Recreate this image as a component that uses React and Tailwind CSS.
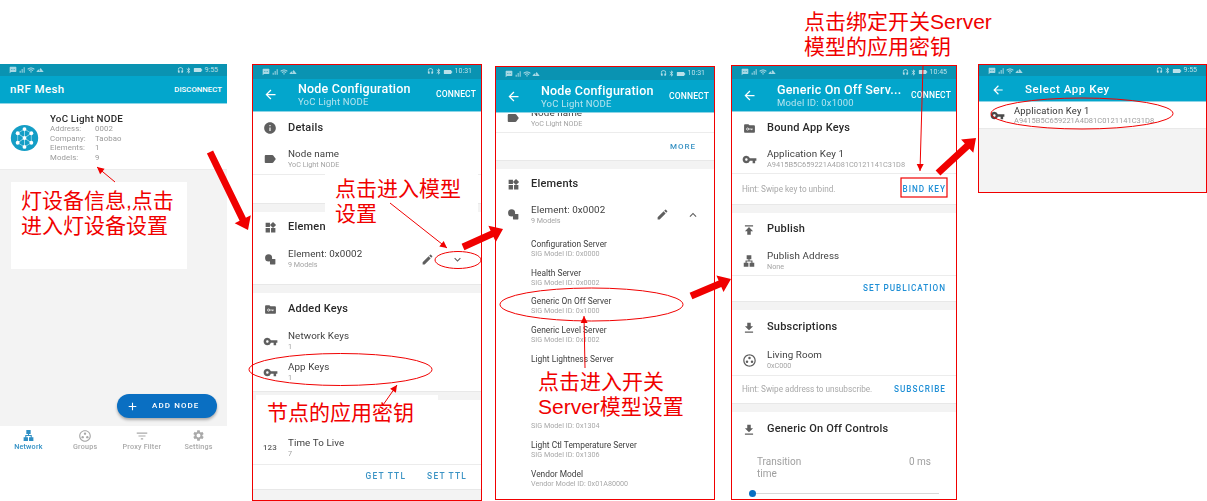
import React from 'react';
import {
  MdInfo, MdLabel, MdWidgets, MdVpnKey, MdArrowBack, MdEdit, MdExpandMore, MdExpandLess,
  MdPublish, MdGetApp, MdOutlineGroupWork, MdFilterList, MdSettings, MdLan, MdAdd,
  MdSignalCellularAlt, MdWifi, MdHeadset, MdBluetooth, MdBatteryFull, MdTextsms, MdLandscape,
} from 'react-icons/md';

const ROBOTO = 'font-[Roboto,"Liberation_Sans",sans-serif]';

function StatusBar({ time, cls }) {
  return (
    <div className={`flex items-center justify-between shrink-0 bg-[#0a93b2] text-[#cfeaf1] pl-[9px] pr-[9px] ${cls}`}>
      <div className="flex items-center gap-[1px] opacity-80">
        <MdTextsms size={8} />
        <MdSignalCellularAlt size={8} />
        <MdWifi size={8} />
        <MdLandscape size={8} />
      </div>
      <div className="flex items-center gap-[1px] opacity-90">
        <MdHeadset size={7} />
        <MdBluetooth size={7} />
        <MdBatteryFull size={10} className="rotate-90" />
        <span className="text-[7px] leading-none ml-[1px]">{time}</span>
      </div>
    </div>
  );
}

function AppBar({ title, sub, action = 'CONNECT' }) {
  return (
    <div className="relative z-10 flex items-center h-[33px] shrink-0 bg-[#03a6cc] border-b border-[#8ed5e6] text-white pl-[10px] pr-[5px]">
      <MdArrowBack size={15} className="shrink-0" />
      <div className="ml-[20px] flex-1 min-w-0">
        <div className="text-[12.5px] leading-[15px] font-medium tracking-[0.2px] whitespace-nowrap">{title}</div>
        <div className="text-[9.5px] leading-[12px] text-[#b6e4ef] tracking-[0.2px] whitespace-nowrap">{sub}</div>
      </div>
      <div className="text-[8.5px] font-medium tracking-[0.15px] shrink-0">{action}</div>
    </div>
  );
}

function Phone({ cls, children }) {
  return (
    <div className={`absolute border-[1.5px] border-[#f00000] overflow-hidden bg-white ${cls}`}>
      <div className={`flex flex-col h-full blur-[0.35px] ${ROBOTO}`}>{children}</div>
    </div>
  );
}

const Band = ({ cls = 'h-[9px]' }) => <div className={`${cls} bg-[#f3f3f3] border-t border-[#e8e8e8] shrink-0`} />;

function Header({ icon, title, cls = 'h-[32px]' }) {
  return (
    <div className={`flex items-center pl-2 shrink-0 ${cls}`}>
      <div className="w-[18px] mr-[9px] flex justify-center text-[#5f5f5f]">{icon}</div>
      <div className="text-[11px] font-medium tracking-[0.2px] text-[#2a2a2a] whitespace-nowrap">{title}</div>
    </div>
  );
}

function Row({ icon, title, sub, right, cls = 'h-[31px]', subCls = 'text-[7.2px]' }) {
  return (
    <div className={`flex items-center pl-2 shrink-0 ${cls}`}>
      <div className="w-[18px] mr-[9px] flex justify-center text-[#5f5f5f]">{icon}</div>
      <div className="flex-1 min-w-0">
        <div className="text-[9.8px] leading-[12px] text-[#404040] whitespace-nowrap tracking-[0.1px]">{title}</div>
        <div className={`${subCls} leading-[10px] text-[#a4a4a4] whitespace-nowrap`}>{sub}</div>
      </div>
      {right}
    </div>
  );
}

function Action({ hint, label, cls = 'h-[29px]' }) {
  return (
    <div className={`flex items-center justify-between pl-[10px] pr-[10px] border-t border-[#ececec] shrink-0 ${cls}`}>
      <span className="text-[8.2px] text-[#a8a8a8] whitespace-nowrap">{hint}</span>
      <span className="text-[8.2px] font-medium tracking-[1px] text-[#1f8fd6] whitespace-nowrap">{label}</span>
    </div>
  );
}

function FolderKey() {
  return (
    <svg width="13" height="13" viewBox="0 0 24 24">
      <path fill="#5f5f5f" d="M10 4H4c-1.1 0-2 .9-2 2v12c0 1.1.9 2 2 2h16c1.1 0 2-.9 2-2V8c0-1.1-.9-2-2-2h-8z" />
      <circle cx="8.5" cy="13" r="2" fill="none" stroke="#fff" strokeWidth="1.4" />
      <path stroke="#fff" strokeWidth="1.4" d="M10.5 13H18M16 13v2" />
    </svg>
  );
}

function Shapes() {
  return (
    <svg width="13" height="13" viewBox="0 0 24 24" fill="#5f5f5f">
      <circle cx="8.5" cy="9" r="6.5" />
      <rect x="11" y="11" width="10" height="10" rx="1" />
    </svg>
  );
}

function Logo() {
  const nodes = [[20, 6], [30, 12], [30, 26], [20, 32], [10, 26], [10, 12], [20, 19]];
  return (
    <svg width="31" height="26" viewBox="0 0 40 38">
      <ellipse cx="20" cy="19" rx="20" ry="19" fill="#149ec6" />
      {nodes.slice(0, 6).map(([x, y], i) => (
        <g key={i}>
          <line x1="20" y1="19" x2={x} y2={y} stroke="#d7f0f7" strokeWidth="1" />
          <line x1={x} y1={y} x2={nodes[(i + 1) % 6][0]} y2={nodes[(i + 1) % 6][1]} stroke="#d7f0f7" strokeWidth="0.8" />
        </g>
      ))}
      {nodes.map(([x, y], i) => <circle key={i} cx={x} cy={y} r="2.8" fill="#fff" />)}
    </svg>
  );
}

function NavItem({ icon, label, active }) {
  return (
    <div className={`flex flex-col items-center w-[57px] ${active ? 'text-[#2f8fc4]' : 'text-[#a9a9a9]'}`}>
      <div className="h-[13px] flex items-center">{icon}</div>
      <div className="text-[7.2px] leading-[9px] font-medium tracking-[0.2px] whitespace-nowrap">{label}</div>
    </div>
  );
}

function PhoneList() {
  const rows = [['Address:', '0002'], ['Company:', 'Taobao'], ['Elements:', '1'], ['Models:', '9']];
  return (
    <div className={`absolute left-0 top-[64px] w-[227px] h-[396px] flex flex-col blur-[0.35px] ${ROBOTO}`}>
      <StatusBar time="9:55" cls="h-[12px]" />
      <div className="flex items-center justify-between h-[28px] shrink-0 bg-[#03a6cc] border-b border-[#8ed5e6] text-white pl-[10px] pr-[5px]">
        <span className="text-[11.5px] font-medium tracking-[0.4px]">nRF Mesh</span>
        <span className="text-[7.8px] font-medium">DISCONNECT</span>
      </div>
      <div className="flex h-[66px] shrink-0 bg-white border-b border-[#ececec] pl-[9px] pt-[9px]">
        <div className="pt-[12px] w-[41px] shrink-0"><Logo /></div>
        <div>
          <div className="text-[9.8px] leading-[11px] font-medium text-[#2a2a2a] tracking-[0.2px]">YoC Light NODE</div>
          {rows.map(([a, b]) => (
            <div key={a} className="flex text-[7.8px] leading-[9.5px] text-[#9a9a9a] tracking-[0.1px]">
              <span className="w-[45px]">{a}</span><span>{b}</span>
            </div>
          ))}
        </div>
      </div>
      <div className="relative flex-none h-[256px] bg-[#f3f3f3]">
        <div className="absolute right-[10px] bottom-[8px] w-[100px] h-[24px] rounded-full bg-[#0a6fc2] shadow-[0_2px_3px_rgba(0,0,0,0.3)] flex items-center text-white pl-[9px]">
          <MdAdd size={13} />
          <span className="ml-[13px] text-[8px] font-medium tracking-[1.1px] whitespace-nowrap">ADD NODE</span>
        </div>
      </div>
      <div className="flex pt-[3px] bg-white flex-1">
        <NavItem active label="Network" icon={<MdLan size={13} />} />
        <NavItem label="Groups" icon={<MdOutlineGroupWork size={14} />} />
        <NavItem label="Proxy Filter" icon={<MdFilterList size={14} />} />
        <NavItem label="Settings" icon={<MdSettings size={13} />} />
      </div>
    </div>
  );
}

function PhoneNode() {
  return (
    <Phone cls="left-[252px] top-[64px] w-[230px] h-[437px]">
      <StatusBar time="10:31" cls="h-[13.5px]" />
      <AppBar title="Node Configuration" sub="YoC Light NODE" />
      <Header icon={<MdInfo size={14} />} title="Details" cls="h-[33px]" />
      <Row icon={<MdLabel size={14} />} title="Node name" sub="YoC Light NODE" cls="h-[29px]" />
      <Action cls="h-[29px]" hint="" label="" />
      <Band />
      <Header icon={<MdWidgets size={13} />} title="Elements" />
      <Row icon={<Shapes />} title="Element: 0x0002" sub="9 Models"
        cls="h-[31px]"
        right={<div className="flex items-center text-[#5f5f5f] mr-[17px]"><MdEdit size={13} /><MdExpandMore size={13} className="ml-[17px]" /></div>} />
      <div className="h-[9px] shrink-0" />
      <Band />
      <Header icon={<FolderKey />} title="Added Keys" cls="h-[33px]" />
      <Row icon={<MdVpnKey size={15} />} title="Network Keys" sub="1" />
      <Row icon={<MdVpnKey size={15} />} title="App Keys" sub="1" />
      <div className="h-[3px] shrink-0" />
      <Band />
      <div className="h-[33px] shrink-0" />
      <Row icon={<span className="text-[8px] font-medium tracking-[0.2px]">123</span>} title="Time To Live" sub="7" />
      <div className="flex items-center justify-end gap-[21px] pr-[14px] h-[25px] border-t border-[#ececec] shrink-0 text-[8.4px] font-medium tracking-[1.2px] text-[#3a93c4]">
        <span>GET TTL</span><span>SET TTL</span>
      </div>
      <Band cls="flex-1" />
    </Phone>
  );
}

const MODELS = [
  ['Configuration Server', 'SIG Model ID: 0x0000'],
  ['Health Server', 'SIG Model ID: 0x0002'],
  ['Generic On Off Server', 'SIG Model ID: 0x1000'],
  ['Generic Level Server', 'SIG Model ID: 0x1002'],
  ['Light Lightness Server', ''],
  ['', ''],
  ['', 'SIG Model ID: 0x1304'],
  ['Light Ctl Temperature Server', 'SIG Model ID: 0x1306'],
  ['Vendor Model', 'Vendor Model ID: 0x01A80000'],
];

function PhoneElements() {
  return (
    <Phone cls="left-[495px] top-[66px] w-[220px] h-[434px]">
      <StatusBar time="10:31" cls="h-[13px]" />
      <AppBar title="Node Configuration" sub="YoC Light NODE" />
      <div className="-mt-[10px] flex flex-col">
        <Row icon={<MdLabel size={14} />} title="Node name" sub="YoC Light NODE" cls="h-[29px]" />
        <div className="flex items-center justify-end pr-[18px] h-[28px] border-t border-[#ececec] text-[8px] font-medium tracking-[1px] text-[#3a93c4]">MORE</div>
        <Band />
        <Header icon={<MdWidgets size={13} />} title="Elements" cls="h-[31px]" />
        <Row icon={<Shapes />} title="Element: 0x0002" sub="9 Models" cls="h-[29px]"
          right={<div className="flex items-center text-[#5f5f5f] mr-[14px]"><MdEdit size={13} /><MdExpandLess size={14} className="ml-[17px]" /></div>} />
        <div className="flex flex-col pt-[10px]">
          {MODELS.map(([t, s], i) => (
            <div key={i} className="h-[28.7px] pl-[35px] shrink-0">
              <div className="h-[10px] text-[8.4px] leading-[10px] text-[#404040] whitespace-nowrap">{t}</div>
              <div className="h-[10px] text-[7.2px] leading-[10px] text-[#a8a8a8] whitespace-nowrap">{s}</div>
            </div>
          ))}
        </div>
      </div>
    </Phone>
  );
}

function PhoneModel() {
  return (
    <Phone cls="left-[731px] top-[64.5px] w-[226px] h-[435px]">
      <StatusBar time="10:45" cls="h-[13.5px]" />
      <AppBar title="Generic On Off Serv..." sub="Model ID: 0x1000" />
      <Header icon={<FolderKey />} title="Bound App Keys" cls="h-[33px]" />
      <Row icon={<MdVpnKey size={15} />} title="Application Key 1" sub="A9415B5C659221A4D81C0121141C31D8" cls="h-[28px]" subCls="text-[7.4px]" />
      <Action hint="Hint: Swipe key to unbind." label="BIND KEY" cls="h-[31px]" />
      <Band />
      <Header icon={<MdPublish size={14} />} title="Publish" cls="h-[33px]" />
      <Row icon={<MdLan size={14} />} title="Publish Address" sub="None" cls="h-[29px]" />
      <Action hint="" label="SET PUBLICATION" cls="h-[26px]" />
      <Band />
      <Header icon={<MdGetApp size={14} />} title="Subscriptions" cls="h-[35px]" />
      <Row icon={<MdOutlineGroupWork size={15} />} title="Living Room" sub="0xC000" cls="h-[30px]" />
      <Action hint="Hint: Swipe address to unsubscribe." label="SUBSCRIBE" cls="h-[28px]" />
      <Band />
      <Header icon={<MdGetApp size={14} />} title="Generic On Off Controls" cls="h-[35px]" />
      <div className="flex justify-between pl-[25px] pr-[25px] pt-[9px] text-[10px] leading-[12px] text-[#a0a0a0]">
        <span className="w-[60px]">Transition time</span><span>0 ms</span>
      </div>
      <div className="relative h-[7px] mt-[10px] mx-[17px] flex items-center">
        <div className="w-[7px] h-[7px] rounded-full bg-[#0a6fc2] shrink-0" />
        <div className="flex-1 h-[1px] bg-[#d8d8d8]" />
      </div>
    </Phone>
  );
}

function PhoneSelect() {
  return (
    <Phone cls="left-[978px] top-[64px] w-[229px] h-[129px]">
      <StatusBar time="9:55" cls="h-[11px]" />
      <div className="flex items-center h-[26px] shrink-0 bg-[#03a6cc] border-b border-[#8ed5e6] text-white pl-[12px] pt-[2px]">
        <MdArrowBack size={14} />
        <span className="ml-[20px] text-[11.5px] font-medium tracking-[0.55px]">Select App Key</span>
      </div>
      <div className="flex items-center h-[27px] shrink-0 pl-[11px] border-b border-[#e9e9e9]">
        <div className="w-[14px] mr-[10px] text-[#4a4a4a]"><MdVpnKey size={15} /></div>
        <div>
          <div className="text-[9.4px] leading-[10px] text-[#333] whitespace-nowrap tracking-[0.2px]">Application Key 1</div>
          <div className="text-[7.5px] leading-[9px] text-[#a0a0a0] whitespace-nowrap">A9415B5C659221A4D81C0121141C31D8</div>
        </div>
      </div>
      <div className="flex-1 bg-[#f3f3f3]" />
    </Phone>
  );
}

function bigArrow(x1, y1, x2, y2, w = 7, hw = 9, hl = 12) {
  const d = Math.hypot(x2 - x1, y2 - y1);
  const ux = (x2 - x1) / d, uy = (y2 - y1) / d, nx = -uy, ny = ux;
  const bx = x2 - ux * hl, by = y2 - uy * hl;
  const p = (x, y) => `${x.toFixed(1)},${y.toFixed(1)}`;
  return [
    p(x1 + nx * w / 2, y1 + ny * w / 2), p(bx + nx * w / 2, by + ny * w / 2), p(bx + nx * hw, by + ny * hw),
    p(x2, y2),
    p(bx - nx * hw, by - ny * hw), p(bx - nx * w / 2, by - ny * w / 2), p(x1 - nx * w / 2, y1 - ny * w / 2),
  ].join(' ');
}

function Overlay() {
  const big = [[210, 152, 248, 230], [463, 247, 503, 229], [691, 296, 731, 279], [938, 173, 976, 138]];
  const thin = [[115, 182, 97, 167], [390, 203, 447, 248], [383, 405, 397, 385], [585, 368, 584, 316], [923, 66, 920, 171]];
  return (
    <svg className="absolute inset-0 z-30 pointer-events-none" width="1207" height="501" viewBox="0 0 1207 501">
      {big.map((a, i) => <polygon key={i} points={bigArrow(...a)} fill="#f00000" />)}
      {thin.map((a, i) => (
        <g key={i}>
          <line x1={a[0]} y1={a[1]} x2={a[2]} y2={a[3]} stroke="#f00000" strokeWidth="1" />
          <polygon points={bigArrow(a[0], a[1], a[2], a[3], 0, 3.5, 7)} fill="#f00000" />
        </g>
      ))}
      <g fill="none" stroke="#f00000" strokeWidth="1">
        <ellipse cx="458" cy="260" rx="23" ry="8.5" />
        <ellipse cx="340.5" cy="369.5" rx="91.5" ry="16" />
        <ellipse cx="591.5" cy="304.5" rx="91.5" ry="16.5" />
        <ellipse cx="1082" cy="113.5" rx="91" ry="15.5" />
        <rect x="901" y="178" width="46" height="19" strokeWidth="1.2" />
      </g>
    </svg>
  );
}

function Note({ cls, lines }) {
  return (
    <div className={`absolute z-20 text-[#f00000] text-[21px] leading-[25px] whitespace-nowrap font-['Liberation_Sans','Noto_Sans_CJK_SC',sans-serif] ${cls}`}>
      {lines.map((l) => <div key={l}>{l}</div>)}
    </div>
  );
}

export default function App() {
  return (
    <div className="relative w-[1207px] h-[501px] bg-white overflow-hidden">
      <PhoneList />
      <PhoneNode />
      <PhoneElements />
      <PhoneModel />
      <PhoneSelect />

      <div className="absolute z-10 bg-white left-[11px] top-[182px] w-[176px] h-[87px]" />
      <div className="absolute z-10 bg-white left-[325px] top-[173px] w-[153px] h-[59px]" />
      <div className="absolute z-10 bg-white left-[256px] top-[395px] w-[182px] h-[32px]" />

      <Note cls="left-[21px] top-[188px]" lines={['灯设备信息,点击', '进入灯设备设置']} />
      <Note cls="left-[335px] top-[176px]" lines={['点击进入模型', '设置']} />
      <Note cls="left-[267px] top-[400px]" lines={['节点的应用密钥']} />
      <Note cls="left-[538px] top-[369px]" lines={['点击进入开关', 'Server模型设置']} />
      <Note cls="left-[804px] top-[9px]" lines={['点击绑定开关Server', '模型的应用密钥']} />

      <Overlay />
    </div>
  );
}
